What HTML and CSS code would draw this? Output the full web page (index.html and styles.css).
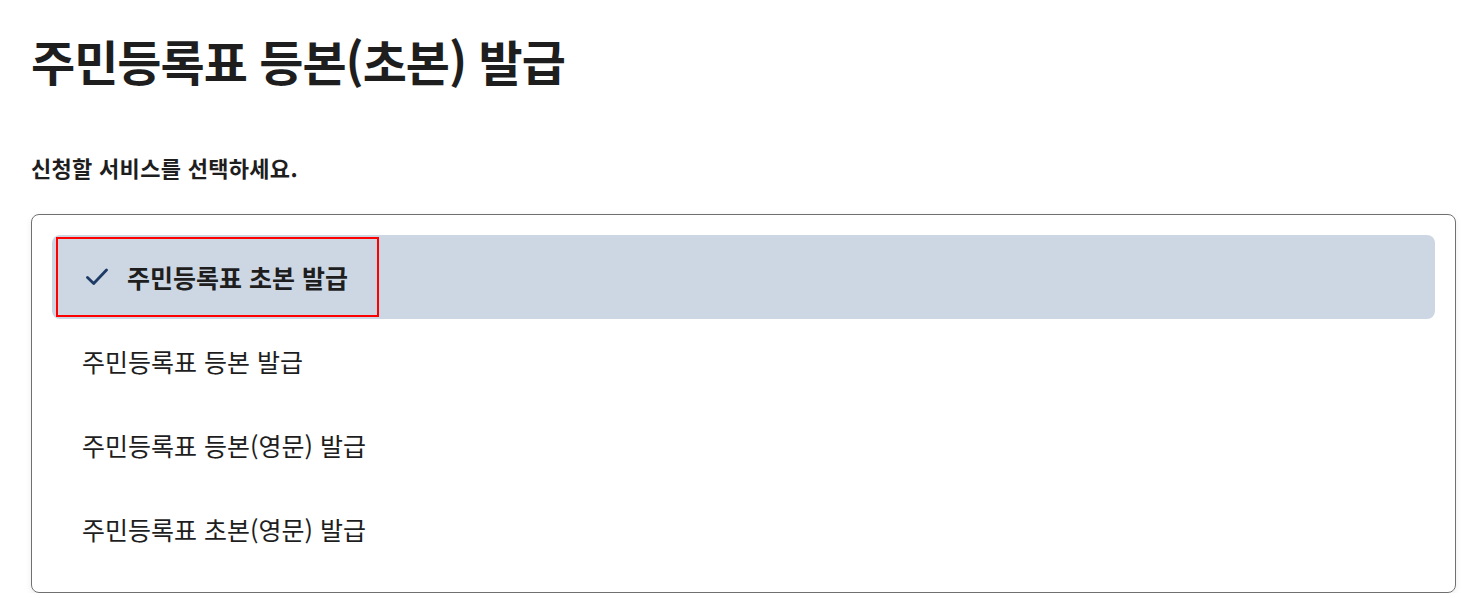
FILE: index.html
```
<!DOCTYPE html>
<html lang="ko">
<head>
	<meta charset="UTF-8">
	<title>주민등록표 등본(초본) 발급</title>
	<link rel="stylesheet" href="styles.css">
</head>
<body>
	<div class="page">
		<h1 class="title">주민등록표 등본(초본) 발급</h1>
		<h3 class="guide">신청할 서비스를 선택하세요.</h3>
		<div class="select_box">
			<div class="opt on">
				<span class="mark">
					<svg class="chk" width="22" height="18" viewBox="0 0 22 18"><path d="M1.5 9.5l6.2 6L20.5 2" fill="none" stroke="#1d3b66" stroke-width="2.8" stroke-linecap="round" stroke-linejoin="round"/></svg>
					<span>주민등록표 초본 발급</span>
				</span>
			</div>
			<div class="opt">주민등록표 등본 발급</div>
			<div class="opt">주민등록표 등본(영문) 발급</div>
			<div class="opt">주민등록표 초본(영문) 발급</div>
		</div>
	</div>
</body>
</html>
```

FILE: styles.css
```
*{
	margin: 0;
	padding: 0;
	box-sizing: border-box;
}
body{
	background: #fff;
	color: #1e1e1e;
	font-family: "Noto Sans CJK KR", "Noto Sans", sans-serif;
}
.page{
	padding: 24px 16px 0 31px;
}
.title{
	font-size: 48px;
	font-weight: 700;
	line-height: 72px;
	letter-spacing: -1px;
}
.guide{
	margin-top: 56px;
	font-size: 22px;
	font-weight: 700;
	line-height: 30px;
	letter-spacing: 0.3px;
}
.select_box{
	margin-top: 32px;
	border: 1px solid #707070;
	border-radius: 8px;
	padding: 20px 20px 21px;
	box-shadow: 0 2px 6px rgba(0,0,0,0.08);
}
.opt{
	height: 84px;
	display: flex;
	align-items: center;
	padding-left: 30px;
	font-size: 25px;
	line-height: 34px;
}
.opt.on{
	background: #cdd7e3;
	border-radius: 8px;
	padding: 2px 4px;
	font-weight: 700;
}
.mark{
	display: flex;
	align-items: center;
	height: 80px;
	width: 323px;
	border: 2px solid #ff0000;
	padding-left: 28px;
}
.chk{
	margin-right: 19px;
}
```
